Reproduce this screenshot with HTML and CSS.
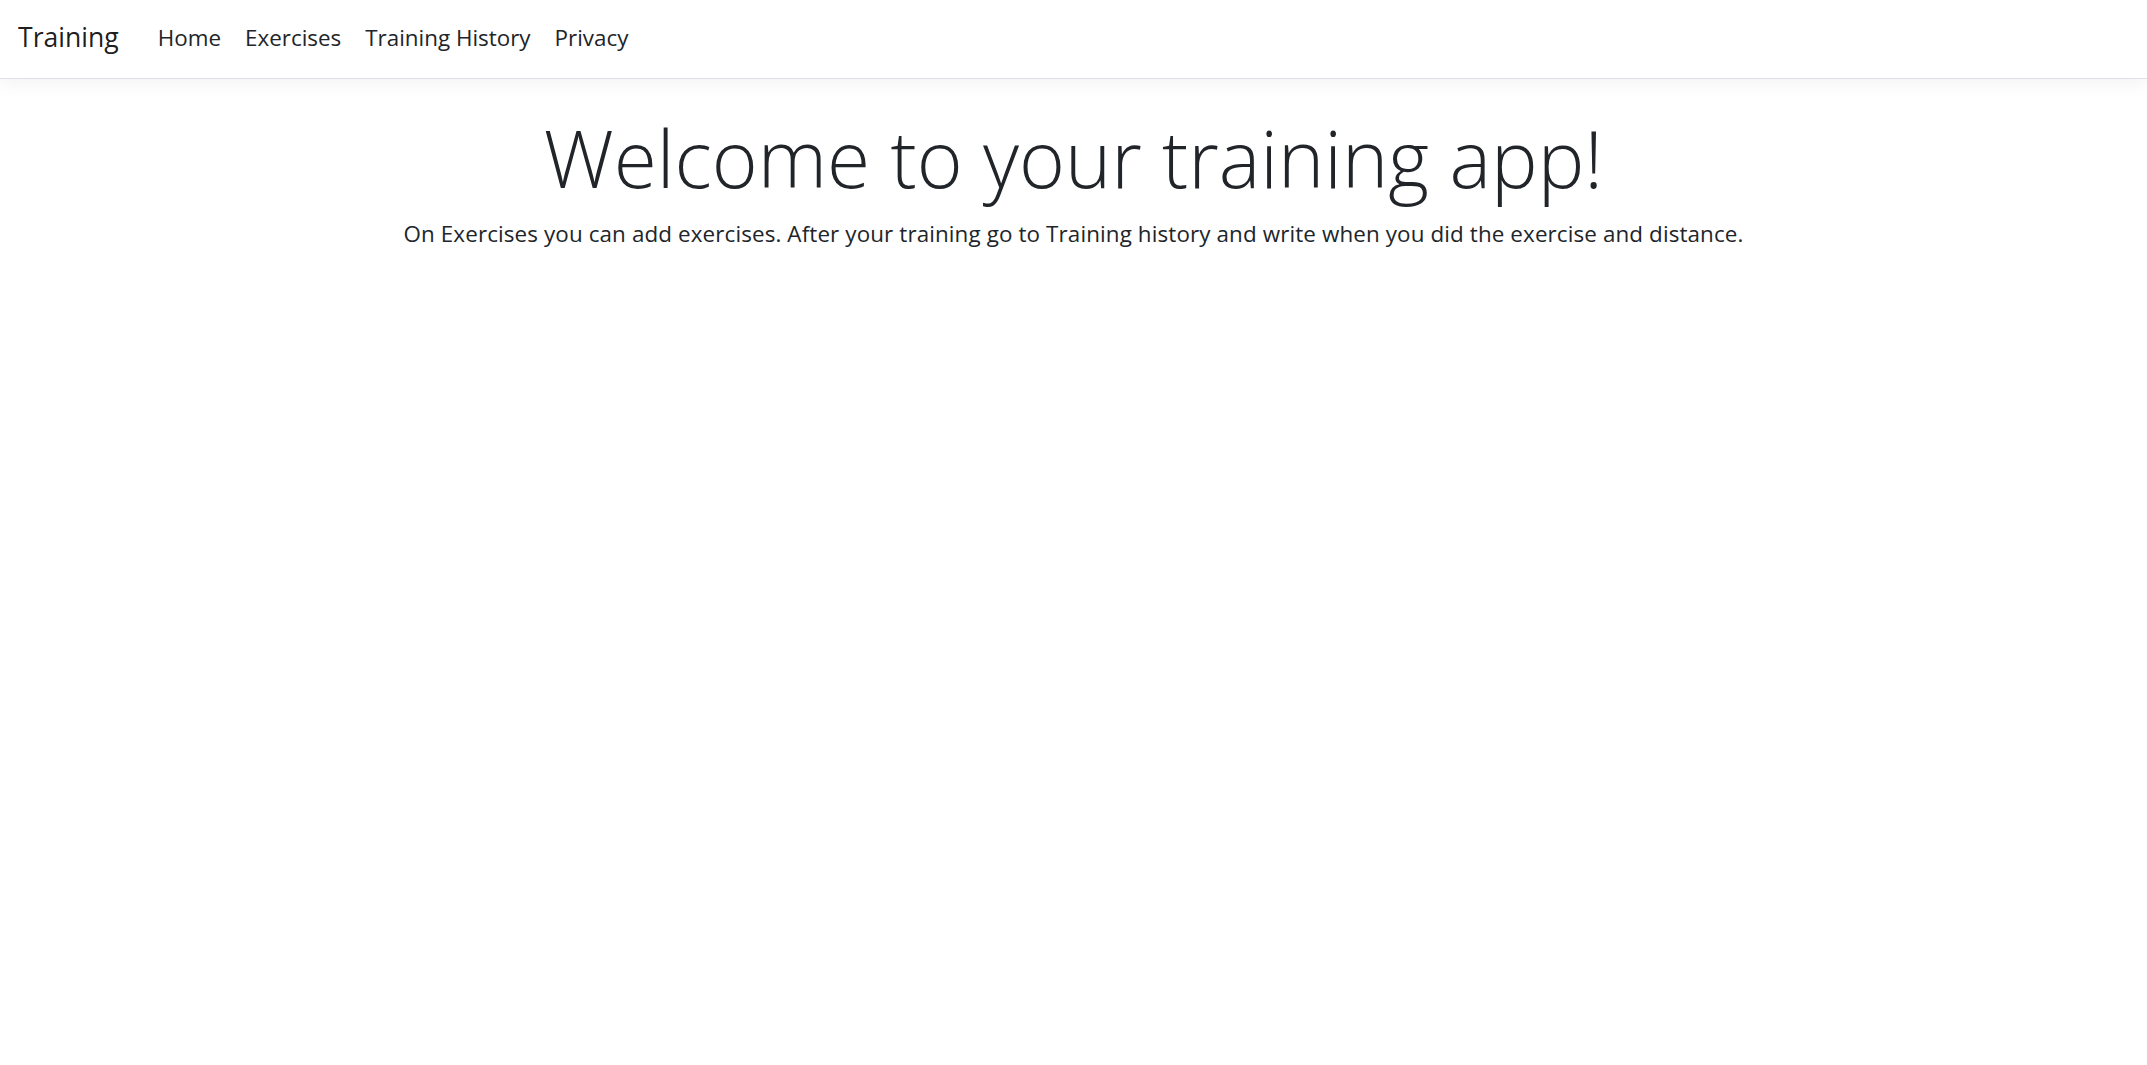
FILE: index.html
```html
<!DOCTYPE html>
<html lang="en">
<head>
<meta charset="utf-8">
<title>Training</title>
<link rel="stylesheet" href="styles.css">
</head>
<body>
<header class="navbar">
  <a class="brand" href="#">Training</a>
  <nav class="nav">
    <a class="nav-link" href="#">Home</a>
    <a class="nav-link" href="#">Exercises</a>
    <a class="nav-link" href="#">Training History</a>
    <a class="nav-link" href="#">Privacy</a>
  </nav>
</header>
<main class="main">
  <h1 class="display">Welcome to your training app!</h1>
  <p class="lead">On Exercises you can add exercises. After your training go to Training history and write when you did the exercise and distance.</p>
</main>
</body>
</html>
```
FILE: styles.css
```css
* { box-sizing: border-box; }
html, body { margin: 0; padding: 0; background: #fff; }
body {
  font-family: "Open Sans", "Noto Sans", sans-serif;
  color: #212529;
}
a { text-decoration: none; }
.navbar {
  display: flex;
  align-items: center;
  height: 79px;
  padding: 0 18px;
  border-bottom: 1px solid #dee2e6;
  box-shadow: 0 5px 17px rgba(0, 0, 0, 0.05);
}
.brand {
  font-size: 26.6px;
  line-height: 42px;
  color: rgba(0, 0, 0, 0.9);
  margin-right: 27px;
  margin-top: -4px;
}
.nav {
  display: flex;
}
.nav-link {
  font-size: 22.4px;
  line-height: 34px;
  padding: 0 12px;
  color: #212529;
  margin-top: -2px;
}
.main {
  padding: 0 21px;
  text-align: center;
}
.display {
  margin: 32px 0 12px;
  font-size: 78.4px;
  font-weight: 300;
  line-height: 94px;
}
.lead {
  margin: 0;
  font-size: 22.4px;
  line-height: 34px;
  letter-spacing: 0.12px;
}
```
